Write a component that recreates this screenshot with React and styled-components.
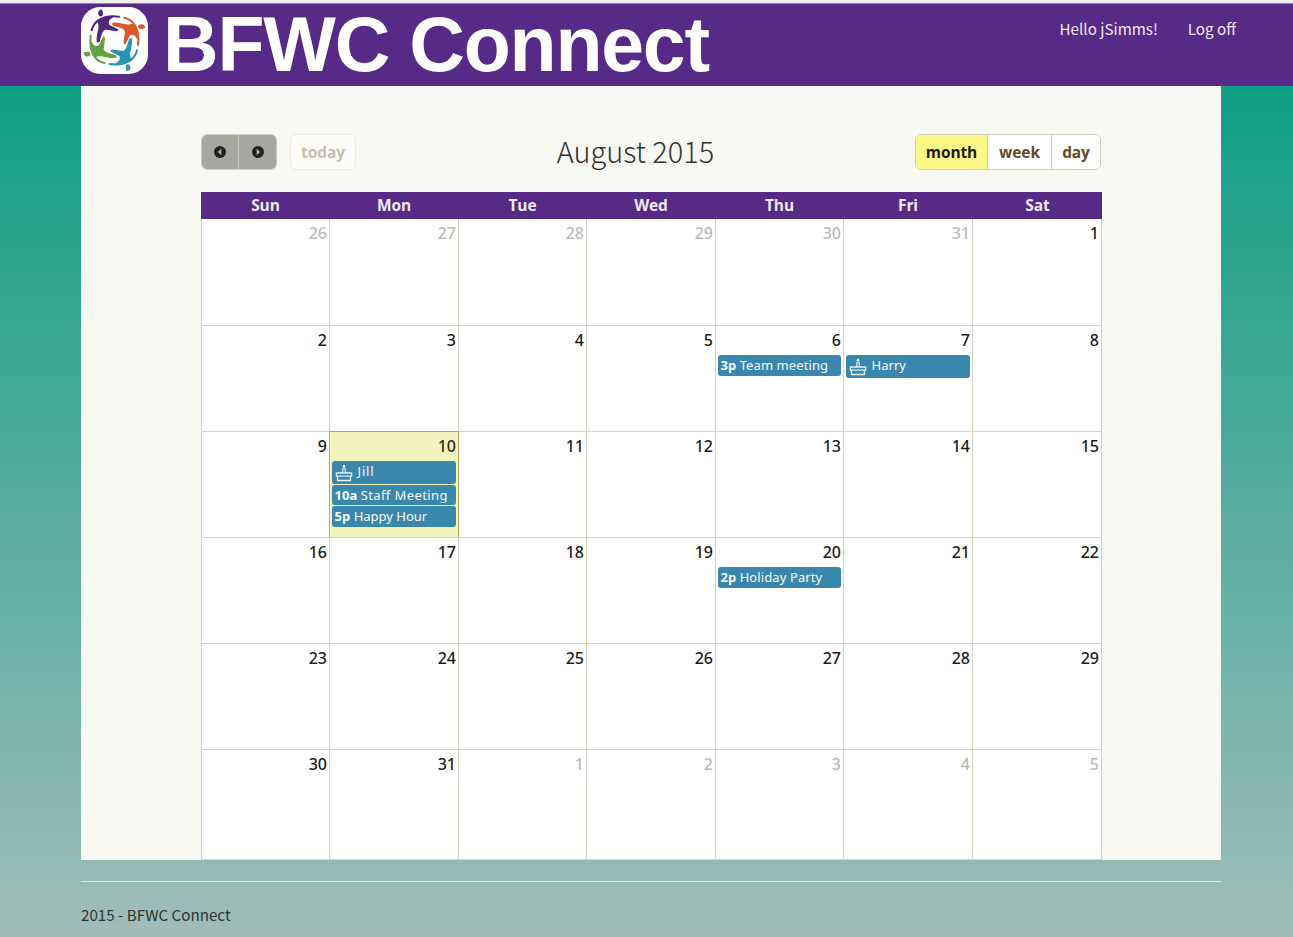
import React from 'react';
import styled, { createGlobalStyle, css } from 'styled-components';

const sourceSans = '"Noto Sans CJK SC", "Noto Sans", sans-serif';
const humanist = '"Open Sans", "Noto Sans", sans-serif';

const GlobalStyle = createGlobalStyle`
  *, *::before, *::after { box-sizing: border-box; }
  body {
    margin: 0;
    background: #a0bdb9;
    font-family: ${sourceSans};
    font-size: 15.2px;
    color: #333;
  }
`;

const Page = styled.div`
  height: 937px;
  display: flex;
  flex-direction: column;
  overflow: hidden;
  background: linear-gradient(#0f9e85 86px, #a0bdb9 937px);
`;

const Header = styled.header`
  height: 86px;
  flex: none;
  border-top: 3px solid #f0f0f0;
  background: #572a87;
  box-shadow: inset 0 1px 0 #8d8496;
  padding: 0 57px 0 81px;
  display: flex;
  align-items: flex-start;
`;

const LogoFrame = styled.svg`
  width: 67px;
  height: 67px;
  flex: none;
  margin-top: 4px;
`;

const Brand = styled.h1`
  margin: 0 auto 0 15px;
  font: bold 77px/83px "Liberation Sans", Arial, sans-serif;
  letter-spacing: -1.2px;
  color: #fff;
  white-space: nowrap;
`;

const Nav = styled.nav`
  display: flex;
  gap: 30px;
  margin-top: 14px;
  line-height: 22px;
`;

const NavLink = styled.a`
  color: #efeaf4;
`;

const Main = styled.main`
  width: 1140px;
  height: 774px;
  flex: none;
  margin-left: 81px;
  padding: 48px 119px 0 120px;
  background: #f9f9f3;
`;

const Toolbar = styled.div`
  display: grid;
  grid-template-columns: 1fr auto 1fr;
  align-items: center;
  height: 36px;
  margin-bottom: 22px;
`;

const ToolbarSide = styled.div`
  display: flex;
  gap: 13px;
  justify-content: ${(p) => (p.$end ? 'flex-end' : 'flex-start')};
  ${(p) => p.$end && css`padding-right: 1px;`}
`;

const Title = styled.h2`
  margin: 0 32px 4px 0;
  font-size: 28.9px;
  font-weight: 300;
  line-height: 32px;
`;

const ButtonGroup = styled.div`
  display: flex;
  height: 36px;
  border: 1px solid #cfcabb;
  border-radius: 6px;
  overflow: hidden;
`;

const Button = styled.button`
  height: 34px;
  width: ${(p) => p.$width}px;
  padding: 0;
  border: 0;
  display: flex;
  align-items: center;
  justify-content: center;
  font: 700 15.5px/34px ${humanist};
  letter-spacing: -0.1px;
  background: #fff;
  color: #654b24;
  &:not(:first-child) { border-left: 1px solid #cfcabb; }
  ${(p) => p.$active && css`background: #fbf888; color: #1c1a08;`}
  ${(p) => p.$arrow && css`background: #a7a7a2;`}
`;

const TodayButton = styled(Button)`
  height: 36px;
  && { border: 1px solid #e9e7df; }
  border-radius: 6px;
  background: #fcfcf9;
  color: #c9bfae;
`;

const columns = '128px 129px 128px 129px 128px 129px 130px';

const WeekHeader = styled.div`
  display: grid;
  grid-template-columns: ${columns};
  height: 27px;
  background: #572a86;
`;

const WeekDay = styled.div`
  padding-left: 1px;
  text-align: center;
  font: 700 15.5px/26px ${humanist};
  letter-spacing: -0.1px;
  color: #ece8ef;
`;

const Grid = styled.div`
  display: grid;
  grid-template-columns: ${columns};
  grid-template-rows: repeat(5, 106px) 111px;
`;

const Day = styled.div`
  padding: 5px 2px 0;
  border-top: 1px solid #d6d3c2;
  border-left: 1px solid ${(p) => (p.$today || p.$afterToday ? '#b3a55e' : '#d6d3c2')};
  background: #fff;
  &:nth-child(-n + 7) { border-top: 0; }
  &:nth-child(7n) { border-right: 1px solid #d6d3c2; }
  &:nth-child(n + 36) { border-bottom: 1px solid #d6d3c2; }
  ${(p) => p.$today && css`
    background: #f2f3bd;
    border-top-color: #b3a55e;
  `}
`;

const DayNumber = styled.div`
  text-align: right;
  font: 500 16px/19px "Noto Sans", sans-serif;
  margin: 0 0 5px;
  color: ${(p) => (p.$other ? '#bbb' : p.$today ? '#2f2e22' : '#1c1c1c')};
`;

const EventBar = styled.div`
  display: flex;
  align-items: flex-start;
  height: ${(p) => (p.$birthday ? 23 : 21)}px;
  margin: 0 0 1px;
  padding: 0 2px 0 2.6px;
  border-radius: 3px;
  background: #3a87ad;
  color: #f4f9fc;
  font: 400 13px/20px "Noto Sans", sans-serif;
  white-space: pre;
  letter-spacing: ${(p) => p.$track || 0}px;
  ${(p) => !p.$birthday && css`
    &:not(:last-child) { height: 20px; }
    & + &:last-child { padding-top: 1px; }
  `}
`;

const EventTime = styled.b`
  font-weight: 700;
  letter-spacing: 0;
  margin-right: 3.4px;
`;

const CakeSvg = styled.svg`
  width: 18px;
  height: 18px;
  margin: 3px 5px 0 0;
  flex: none;
`;

const Footer = styled.footer`
  width: 1140px;
  margin: 21px 0 0 81px;
  padding-top: 21px;
  border-top: 1px solid #dcebe8;
  line-height: 22px;
`;

function Figure({ color, turn }) {
  return (
    <g transform={`rotate(${turn} 109 109)`} fill="none" stroke={color} strokeLinecap="round" strokeLinejoin="round">
      <path d="M62 22 Q67 15 73 17 L75 33 Q70 40 64 36 Q58 30 62 22Z" fill={color} stroke="none" />
      <path d="M41 79 C44 65 51 56 61 49 C77 38 99 35 123 38" strokeWidth="6" />
      <path d="M60 50 C75 40 88 38 104 39 C91 46 88 54 92 63 L119 77 Q117 81 111 79 L82 75 C73 77 69 88 64 110 Q61 116 58 113 Q56 105 61 83 C65 68 64 60 60 50Z" fill={color} strokeWidth="3.5" />
    </g>
  );
}

function Logo() {
  return (
    <LogoFrame viewBox="9 9 201 201">
      <rect x="9" y="9" width="201" height="201" rx="58" fill="#fff" />
      <Figure color="#52267c" turn={0} />
      <Figure color="#dd5728" turn={90} />
      <Figure color="#2c92b5" turn={180} />
      <Figure color="#64a440" turn={270} />
    </LogoFrame>
  );
}

function ArrowIcon({ left }) {
  return (
    <svg width="12" height="12" viewBox="0 0 12 12">
      <circle cx="6" cy="6" r="6" fill="#222" />
      <path d={left ? 'M7.3 2.8 L3.8 6 L7.3 9.2Z' : 'M4.7 2.8 L8.2 6 L4.7 9.2Z'} fill="#b0b0ab" />
    </svg>
  );
}

function Cake() {
  return (
    <CakeSvg viewBox="0 0 18 18" fill="none" stroke="#e3f0f6" strokeWidth="1.3">
      <path d="M9 .8 L10.2 2.5 L9 3.8 L7.8 2.5Z" fill="#e3f0f6" strokeWidth=".8" />
      <path d="M7.8 9 V4.8 H10.2 V9" strokeWidth="1.1" />
      <path d="M1.4 13 V9 H16.6 V13" />
      <path d="M1.4 11.3 Q3.2 13.2 5 11.6 Q7 13.2 9 11.6 Q11 13.2 13 11.6 Q14.8 13.2 16.6 11.3" strokeWidth="1.1" />
      <path d="M2.5 12.9 V16.5 H15.5 V12.9" />
    </CakeSvg>
  );
}

const events = {
  '7-6': [{ time: '3p', title: 'Team meeting', track: 0.1 }],
  '7-7': [{ birthday: true, title: 'Harry' }],
  '7-10': [
    { birthday: true, title: 'Jill', track: 0.8 },
    { time: '10a', title: 'Staff Meeting', track: 0.4 },
    { time: '5p', title: 'Happy Hour', track: 0 },
  ],
  '7-20': [{ time: '2p', title: 'Holiday Party', track: 0.1 }],
};

const days = Array.from({ length: 42 }, (_, i) => new Date(2015, 6, 26 + i));

function DayCell({ date }) {
  const month = date.getMonth();
  const number = date.getDate();
  const today = month === 7 && number === 10;
  const list = events[`${month}-${number}`] || [];
  return (
    <Day $today={today} $afterToday={month === 7 && number === 11}>
      <DayNumber $other={month !== 7} $today={today}>{number}</DayNumber>
      {list.map((e) => (
        <EventBar key={e.title} $birthday={e.birthday} $track={e.track}>
          {e.birthday ? <Cake /> : <EventTime>{e.time}</EventTime>}
          {e.title}
        </EventBar>
      ))}
    </Day>
  );
}

export default function App() {
  return (
    <Page>
      <GlobalStyle />
      <Header>
        <Logo />
        <Brand>BFWC Connect</Brand>
        <Nav>
          <NavLink>Hello jSimms!</NavLink>
          <NavLink>Log off</NavLink>
        </Nav>
      </Header>
      <Main>
        <Toolbar>
          <ToolbarSide>
            <ButtonGroup>
              <Button $width={36} $arrow><ArrowIcon left /></Button>
              <Button $width={38} $arrow><ArrowIcon /></Button>
            </ButtonGroup>
            <TodayButton $width={66}>today</TodayButton>
          </ToolbarSide>
          <Title>August 2015</Title>
          <ToolbarSide $end>
            <ButtonGroup>
              <Button $width={71} $active>month</Button>
              <Button $width={64}>week</Button>
              <Button $width={49}>day</Button>
            </ButtonGroup>
          </ToolbarSide>
        </Toolbar>
        <WeekHeader>
          {['Sun', 'Mon', 'Tue', 'Wed', 'Thu', 'Fri', 'Sat'].map((d) => <WeekDay key={d}>{d}</WeekDay>)}
        </WeekHeader>
        <Grid>
          {days.map((d) => <DayCell key={d.getTime()} date={d} />)}
        </Grid>
      </Main>
      <Footer>2015 - BFWC Connect</Footer>
    </Page>
  );
}
